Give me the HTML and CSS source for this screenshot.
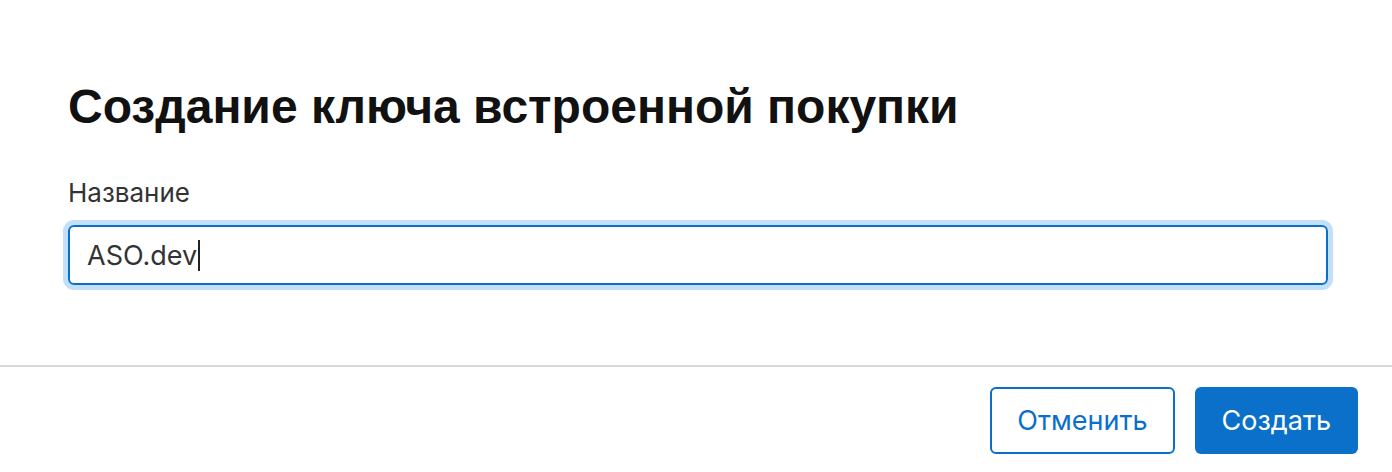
FILE: index.html
```html
<!DOCTYPE html>
<html lang="ru">
<head>
  <meta charset="UTF-8">
  <title>Создание ключа встроенной покупки</title>
  <link rel="stylesheet" href="styles.css">
</head>
<body>
  <div class="dialog">
    <div class="dialog-body">
      <h1>Создание ключа встроенной покупки</h1>
      <label class="field-label" for="name">Название</label>
      <div class="field">
        <span class="field-value">ASO.dev</span><span class="caret"></span>
      </div>
    </div>
    <div class="dialog-footer">
      <button class="btn btn-secondary">Отменить</button>
      <button class="btn btn-primary">Создать</button>
    </div>
  </div>
</body>
</html>
```

FILE: styles.css
```css
body {
  margin: 0;
  background: #fff;
  font-family: Inter, "Noto Sans", sans-serif;
  color: #1d1d1f;
}
.dialog-body {
  padding: 79px 64px 80px 68px;
}
h1 {
  margin: 0 0 42px;
  font-family: "Liberation Sans", Arial, sans-serif;
  font-size: 48px;
  line-height: 56px;
  font-weight: 700;
  color: #111;
}
.field-label {
  display: block;
  font-size: 26px;
  line-height: 32px;
  color: #333;
  margin-bottom: 16px;
}
.field {
  display: flex;
  align-items: center;
  height: 56px;
  padding: 0 17px;
  border: 2px solid #0a6ecb;
  border-radius: 6px;
  box-shadow: 0 0 0 5px #c3e0fb;
  font-size: 27px;
  color: #333;
}
.caret {
  display: inline-block;
  width: 2px;
  height: 31px;
  background: #222;
  margin-left: 1px;
}
.dialog-footer {
  border-top: 2px solid #d7d7d7;
  display: flex;
  justify-content: flex-end;
  gap: 20px;
  padding: 20px 34px 0;
}
.btn {
  height: 67px;
  padding: 0 25px;
  border-radius: 6px;
  font-family: Inter, "Noto Sans", sans-serif;
  font-size: 27px;
  cursor: pointer;
}
.btn-secondary {
  background: #fff;
  border: 2px solid #0a6ecb;
  color: #0a6ecb;
}
.btn-primary {
  padding: 0 27px;
  background: #0a70c9;
  border: none;
  color: #fff;
}
```
